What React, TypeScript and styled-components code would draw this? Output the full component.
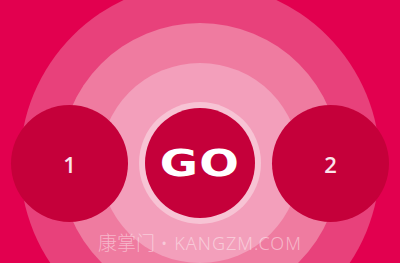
import React from 'react';
import styled, { createGlobalStyle } from 'styled-components';

const GlobalStyle = createGlobalStyle`
  html, body {
    margin: 0;
    padding: 0;
  }
  body {
    font-family: "Noto Sans", "Liberation Sans", sans-serif;
    background: #e2004f;
  }
`;

const Stage = styled.div`
  position: relative;
  width: 400px;
  height: 263px;
  box-sizing: border-box;
  padding-top: 63px;
  overflow: hidden;
  background: #e2004f;
  display: grid;
  grid-template-rows: 200px;
  grid-template-columns: 400px;
  place-items: center;
`;

const Ring = styled.div<{ size: number; color: string }>`
  grid-area: 1 / 1;
  width: ${({ size }) => size}px;
  height: ${({ size }) => size}px;
  flex-shrink: 0;
  border-radius: 50%;
  background: ${({ color }) => color};
  display: flex;
  align-items: center;
  justify-content: center;
`;

const Row = styled.div`
  grid-area: 1 / 1;
  display: flex;
  align-items: center;
  gap: 11px;
`;

const Player = styled.button`
  width: 117px;
  height: 117px;
  flex-shrink: 0;
  border: none;
  border-radius: 50%;
  background: #c5003a;
  color: #fbe3ea;
  font-family: "Open Sans", "Noto Sans", sans-serif;
  font-weight: 600;
  font-size: 22px;
  padding: 0;
  padding-top: 2px;
  display: flex;
  align-items: center;
  justify-content: center;
`;

const GoHalo = styled.div`
  width: 122px;
  height: 122px;
  flex-shrink: 0;
  border-radius: 50%;
  background: #f7c3d4;
  display: flex;
  align-items: center;
  justify-content: center;
`;

const GoButton = styled.button`
  width: 110px;
  height: 110px;
  border: none;
  border-radius: 50%;
  background: #c5003a;
  color: #ffffff;
  padding: 0;
  display: flex;
  align-items: center;
  justify-content: center;
`;

const GoLabel = styled.span`
  display: inline-block;
  font-family: "DejaVu Sans", "Noto Sans", sans-serif;
  font-weight: 700;
  font-size: 37px;
  letter-spacing: 1px;
  line-height: 1;
  transform: scaleX(1.26);
`;

const Watermark = styled.div`
  position: absolute;
  left: 0;
  right: 0;
  top: 228px;
  text-align: center;
  font-family: "Noto Sans", "Noto Sans CJK SC", sans-serif;
  font-weight: 300;
  font-size: 18px;
  letter-spacing: 1px;
  color: rgba(255, 255, 255, 0.45);
  pointer-events: none;
`;

const Han = styled.span`
  font-family: "Noto Sans CJK SC", sans-serif;
  font-weight: 300;
  font-size: 19px;
  letter-spacing: 0;
`;

export default function App() {
  return (
    <>
      <GlobalStyle />
      <Stage>
        <Ring size={360} color="#e8417b">
          <Ring size={280} color="#ef7ba0">
            <Ring size={200} color="#f39fbb" />
          </Ring>
        </Ring>
        <Row>
          <Player type="button">1</Player>
          <GoHalo>
            <GoButton type="button">
              <GoLabel>GO</GoLabel>
            </GoButton>
          </GoHalo>
          <Player type="button">2</Player>
        </Row>
        <Watermark>
          <Han>康掌门</Han> • KANGZM.COM
        </Watermark>
      </Stage>
    </>
  );
}
